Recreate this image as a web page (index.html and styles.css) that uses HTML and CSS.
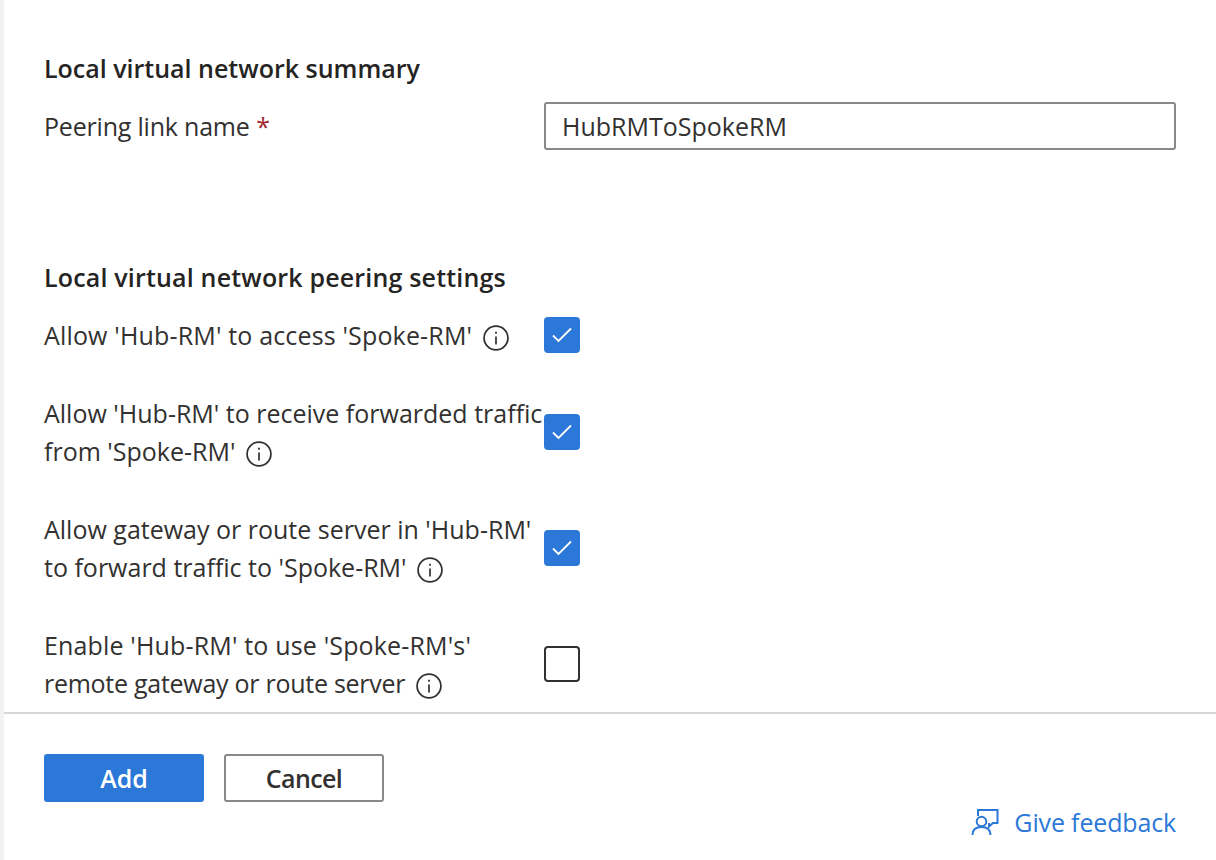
FILE: index.html
```html
<!DOCTYPE html>
<html lang="en">
<head>
<meta charset="utf-8">
<title>Add peering</title>
<link rel="stylesheet" href="styles.css">
</head>
<body>
<div class="pane">
  <main class="content">
    <h2 class="heading">Local virtual network summary</h2>
    <div class="field">
      <label class="label" for="link"><span class="tight">Peering link name</span> <span class="req">*</span></label>
      <input class="input" id="link" type="text" value="HubRMToSpokeRM">
    </div>
    <h2 class="heading second">Local virtual network peering settings</h2>
    <div class="rows">
      <div class="row">
        <div class="label"><span class="loose">Allow 'Hub-RM' to access 'Spoke-RM'</span> <svg class="info" viewBox="0 0 24 24"><circle cx="12" cy="12" r="11"/><path d="M12 10.500V18M12 6.200v1.800"/></svg></div>
        <span class="check on"><svg viewBox="0 0 36 36"><path d="M9 18.500l5.500 5.500L27 11.500"/></svg></span>
      </div>
      <div class="row">
        <div class="label">Allow 'Hub-RM' to receive forwarded traffic<br>from 'Spoke-RM' <svg class="info" viewBox="0 0 24 24"><circle cx="12" cy="12" r="11"/><path d="M12 10.500V18M12 6.200v1.800"/></svg></div>
        <span class="check on"><svg viewBox="0 0 36 36"><path d="M9 18.500l5.500 5.500L27 11.500"/></svg></span>
      </div>
      <div class="row">
        <div class="label">Allow gateway or route server in 'Hub-RM'<br>to forward traffic to 'Spoke-RM' <svg class="info" viewBox="0 0 24 24"><circle cx="12" cy="12" r="11"/><path d="M12 10.500V18M12 6.200v1.800"/></svg></div>
        <span class="check on"><svg viewBox="0 0 36 36"><path d="M9 18.500l5.500 5.500L27 11.500"/></svg></span>
      </div>
      <div class="row">
        <div class="label"><span class="loose">Enable 'Hub-RM' to use 'Spoke-RM's'</span><br><span class="tighter">remote gateway or route server</span> <svg class="info" viewBox="0 0 24 24"><circle cx="12" cy="12" r="11"/><path d="M12 10.500V18M12 6.200v1.800"/></svg></div>
        <span class="check"></span>
      </div>
    </div>
  </main>
  <footer class="footer">
    <div class="buttons">
      <button class="btn primary" type="button">Add</button>
      <button class="btn" type="button">Cancel</button>
    </div>
    <a class="feedback" href="#">
      <svg class="fb-icon" viewBox="0 0 28 28"><path d="M7 8V2h19.500v13H22l-4 3.500V15"/><circle cx="10.500" cy="13.500" r="4.800"/><path d="M1.500 27c0-5.500 3.500-8 9-8s9 2.500 9 8"/></svg>
      <span>Give feedback</span>
    </a>
  </footer>
</div>
</body>
</html>
```
FILE: styles.css
```css
* { box-sizing: border-box; }
html, body { margin: 0; height: 100%; }
body {
  background: #fff;
  color: #323130;
  font-family: "Open Sans", "Noto Sans", "Liberation Sans", sans-serif;
  font-size: 25px;
  overflow: hidden;
}
.pane {
  height: 860px;
  border-left: 4px solid #f3f2f1;
  display: flex;
  flex-direction: column;
}
.content {
  height: 712px;
  padding: 49px 40px 0;
  overflow: hidden;
  flex: none;
}
.heading {
  margin: 0;
  font-size: 25px;
  line-height: 38px;
  font-weight: 600;
  color: #252423;
}
.second { margin-top: 108px; letter-spacing: 0.18px; }
.field {
  display: flex;
  align-items: center;
  margin-top: 15px;
  height: 48px;
}
.label {
  width: 500px;
  flex: none;
  line-height: 38px;
  white-space: nowrap;
}
.loose { letter-spacing: 0.16px; }
.tight { letter-spacing: -0.2px; }
.tighter { letter-spacing: -0.27px; }
.req { color: #a4262c; }
.input {
  flex: 1;
  min-width: 0;
  height: 48px;
  border: 2px solid #8a8886;
  border-radius: 3px;
  padding: 0 16px;
  font: inherit;
  color: #323130;
  background: #fff;
}
.rows {
  display: flex;
  flex-direction: column;
  gap: 40px;
  margin-top: 20px;
}
.row { display: flex; align-items: center; }
.info {
  width: 26px;
  height: 26px;
  margin-left: 4px;
  vertical-align: -6px;
  fill: none;
  stroke: #323130;
  stroke-width: 1.600;
}
.check {
  width: 36px;
  height: 36px;
  flex: none;
  border: 2px solid #323130;
  border-radius: 4px;
  background: #fff;
}
.check.on {
  border: 0;
  background: #2b78d8;
}
.check svg {
  display: block;
  width: 36px;
  height: 36px;
  fill: none;
  stroke: #fff;
  stroke-width: 1.800;
}
.footer {
  flex: 1;
  border-top: 2px solid #d6d6d6;
  padding: 40px 40px 0;
  display: flex;
  justify-content: space-between;
  align-items: flex-start;
}
.buttons { display: flex; gap: 20px; }
.btn {
  width: 160px;
  height: 48px;
  border: 2px solid #8a8886;
  border-radius: 3px;
  background: #fff;
  color: #323130;
  font: 600 25px "Open Sans", "Noto Sans", sans-serif;
  letter-spacing: -0.6px;
  padding: 0;
}
.btn.primary {
  border: 0;
  background: #2b78d8;
  color: #fff;
  letter-spacing: 0;
}
.feedback {
  display: flex;
  align-items: center;
  gap: 15px;
  margin-top: 49px;
  color: #2b78d8;
  text-decoration: none;
  line-height: 38px;
  letter-spacing: -0.15px;
}
.fb-icon {
  width: 28px;
  height: 28px;
  fill: none;
  stroke: #2b78d8;
  stroke-width: 2;
}
```
